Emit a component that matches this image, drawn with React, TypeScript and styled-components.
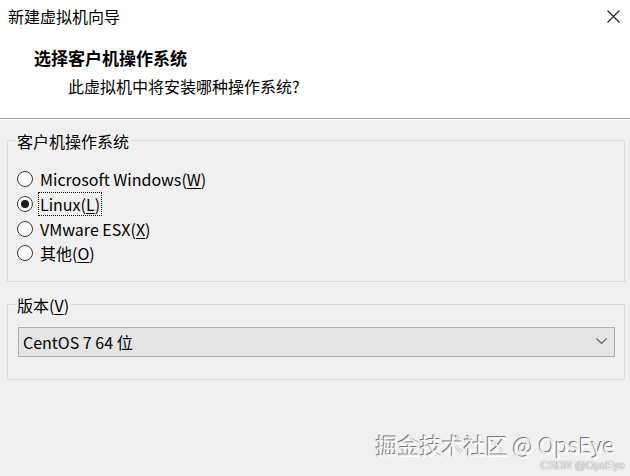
import React from 'react';
import styled, { createGlobalStyle } from 'styled-components';

const GlobalStyle = createGlobalStyle`
  html, body {
    margin: 0;
    padding: 0;
  }
  body {
    width: 630px;
    height: 476px;
    overflow: hidden;
    background: #f0f0f0;
    font-family: "Noto Sans CJK SC", "Noto Sans", sans-serif;
  }
`;

const Window = styled.div`
  width: 630px;
  height: 476px;
  background: #f0f0f0;
  color: #000;
  display: flex;
  flex-direction: column;
  font-family: "Noto Sans CJK SC", "Noto Sans", sans-serif;
`;

const Header = styled.header`
  background: #fff;
  height: 118px;
  border-bottom: 1px solid #a0a0a0;
  box-shadow: 0 1px 0 #ffffff;
  display: flex;
  flex-direction: column;
  flex-shrink: 0;
`;

const TitleBar = styled.div`
  height: 32px;
  display: flex;
  align-items: center;
  justify-content: space-between;
  padding: 0 2px 0 8px;
`;

const Title = styled.h1`
  margin: 0;
  font-size: 16px;
  font-weight: 400;
  line-height: 32px;
  color: #000;
`;

const CloseButton = styled.button`
  width: 30px;
  height: 30px;
  padding: 0;
  border: 0;
  background: none;
  display: flex;
  align-items: center;
  justify-content: center;
`;

const HeaderText = styled.div`
  padding: 14px 0 0 34px;
`;

const Heading = styled.h2`
  margin: 0;
  font-size: 17px;
  font-weight: 700;
  line-height: 24px;
`;

const Subheading = styled.p`
  margin: 4px 0 0 34px;
  font-size: 16px;
  line-height: 24px;
`;

const Content = styled.main`
  flex: 1;
  display: flex;
  flex-direction: column;
  padding-top: 21px;
`;

const GroupBox = styled.section<{ $gap?: number }>`
  margin: ${(p) => p.$gap ?? 0}px 5px 0 7px;
  border: 1px solid #dcdcdc;
  padding: 0 9px 0 9px;
  display: flex;
  flex-direction: column;
`;

const GroupLabel = styled.h3`
  margin: -11px 0 0 -2px;
  padding: 0 2px;
  width: fit-content;
  background: #f0f0f0;
  font-size: 16px;
  font-weight: 400;
  line-height: 22px;
`;

const RadioList = styled.div`
  margin: 15px 0 15px 0;
  display: flex;
  flex-direction: column;
`;

const RadioRow = styled.label`
  height: 24.7px;
  display: flex;
  align-items: center;
  gap: 6px;
  font-size: 16px;
  line-height: 22px;
`;

const RadioInput = styled.input.attrs({ type: 'radio' })`
  appearance: none;
  margin: 0;
  width: 16px;
  height: 16px;
  box-sizing: border-box;
  border: 1px solid #3a3a3a;
  border-radius: 50%;
  background: #fff;
  display: grid;
  place-items: center;
  &:checked::before {
    content: '';
    width: 8px;
    height: 8px;
    border-radius: 50%;
    background: #1a1a1a;
  }
`;

const RadioText = styled.span<{ $focused?: boolean }>`
  padding: 0 1px;
  outline: ${(p) => (p.$focused ? '1px dotted #000' : 'none')};
  outline-offset: 0;
`;

const Mnemonic = styled.u`
  text-decoration: underline;
  text-underline-offset: 2px;
`;

const Select = styled.div`
  margin: 11px 0 22px 1px;
  height: 30px;
  box-sizing: border-box;
  border: 1px solid #adadad;
  background: #e5e5e5;
  display: flex;
  align-items: center;
  justify-content: space-between;
  padding: 0 7px 0 4px;
  font-size: 16px;
`;

const Footer = styled.footer`
  display: flex;
  flex-direction: column;
  align-items: flex-end;
  gap: 2px;
  padding: 0 5px 4px 0;
`;

const Watermark = styled.div`
  padding-right: 10px;
  font-size: 22px;
  line-height: 26px;
  color: #f2f2f2;
  text-shadow: -1px -1px 0 #7a7a7a, 1px 1px 0 #ffffff, 0 0 1px #8a8a8a;
`;

const Credit = styled.div`
  font-family: "Liberation Sans", "Noto Sans", sans-serif;
  font-size: 11px;
  line-height: 13px;
  color: #f4f4f4;
  text-shadow: 0 0 1px #888, 0 0 1px #999;
`;

const options = [
  { label: 'Microsoft Windows', key: 'W' },
  { label: 'Linux', key: 'L', checked: true },
  { label: 'VMware ESX', key: 'X' },
  { label: '其他', key: 'O' },
];

export default function App() {
  return (
    <>
      <GlobalStyle />
      <Window>
        <Header>
          <TitleBar>
            <Title>新建虚拟机向导</Title>
            <CloseButton aria-label="关闭">
              <svg width="13" height="13" viewBox="0 0 13 13">
                <path d="M0.5 0.5 L12.5 12.5 M12.5 0.5 L0.5 12.5" stroke="#222" strokeWidth="1.1" />
              </svg>
            </CloseButton>
          </TitleBar>
          <HeaderText>
            <Heading>选择客户机操作系统</Heading>
            <Subheading>此虚拟机中将安装哪种操作系统?</Subheading>
          </HeaderText>
        </Header>
        <Content>
          <GroupBox>
            <GroupLabel>客户机操作系统</GroupLabel>
            <RadioList>
              {options.map((o) => (
                <RadioRow key={o.key}>
                  <RadioInput name="os" defaultChecked={o.checked} />
                  <RadioText $focused={o.checked}>
                    {o.label}(<Mnemonic>{o.key}</Mnemonic>)
                  </RadioText>
                </RadioRow>
              ))}
            </RadioList>
          </GroupBox>
          <GroupBox $gap={22}>
            <GroupLabel>
              版本(<Mnemonic>V</Mnemonic>)
            </GroupLabel>
            <Select role="combobox">
              <span>CentOS 7 64 位</span>
              <svg width="11" height="7" viewBox="0 0 11 7">
                <path d="M0.5 0.5 L5.5 5.5 L10.5 0.5" fill="none" stroke="#606060" strokeWidth="1.1" />
              </svg>
            </Select>
          </GroupBox>
        </Content>
        <Footer>
          <Watermark>掘金技术社区 @ OpsEye</Watermark>
          <Credit>CSDN @OpsEye</Credit>
        </Footer>
      </Window>
    </>
  );
}
